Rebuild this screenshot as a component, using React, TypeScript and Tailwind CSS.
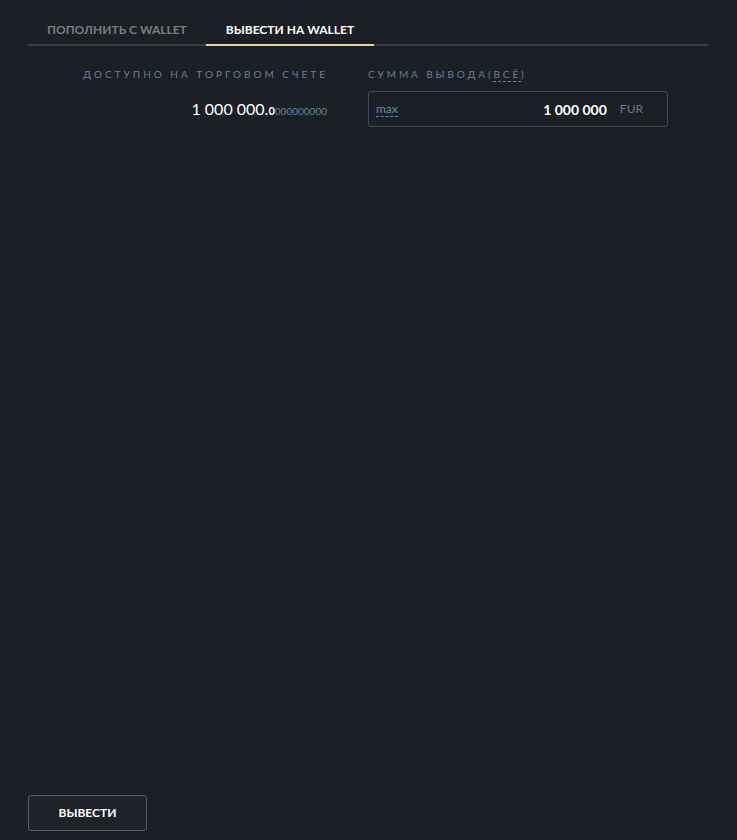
import React from "react";

export default function App() {
  return (
    <div
      className="min-h-[840px] w-full bg-[#1b1f26] flex flex-col px-[28px] pb-[9px]"
      style={{ fontFamily: "Lato, 'Noto Sans', sans-serif" }}
    >
      <div className="flex border-b-2 border-[#3a3e44] mt-[15px] w-[680px]">
        <div className="px-[19px] h-[31px] flex items-center text-[12px] font-bold text-[#7b7d80] -mb-[2px] border-b-2 border-transparent">
          ПОПОЛНИТЬ С WALLET
        </div>
        <div className="px-[20px] h-[31px] flex items-center text-[12px] font-bold text-white -mb-[2px] border-b-2 border-[#f3d08f]">
          ВЫВЕСТИ НА WALLET
        </div>
      </div>

      <div className="flex gap-[40px] mt-[21px]">
        <div className="w-[300px] flex flex-col items-end">
          <div className="text-[10px] tracking-[3px] text-[#6a8094] leading-[14px]">
            ДОСТУПНО НА ТОРГОВОМ СЧЕТЕ
          </div>
          <div className="mt-[16px] flex items-baseline mr-[1px]">
            <span className="text-[16px] text-white">1 000 000.</span>
            <span className="text-[11px] text-white font-bold">0</span>
            <span className="text-[10px] text-[#6a8094]">000000000</span>
          </div>
        </div>
        <div className="w-[300px] flex flex-col">
          <div className="text-[10px] tracking-[2.9px] text-[#6a8094] leading-[14px] flex">
            СУММА ВЫВОДА(
            <span className="border-b border-dashed border-[#6a8094]">ВСЁ</span>)
          </div>
          <div className="mt-[9px] h-[36px] border border-[#474c53] rounded-[3px] flex items-center pl-[7px] pr-[24px]">
            <span className="text-[12px] text-[#6a8ca2] border-b border-dashed border-[#6a8ca2] leading-[14px]">
              max
            </span>
            <span className="ml-auto text-[14px] font-bold text-white">1 000 000</span>
            <span className="ml-[13px] text-[12px] text-[#6d7782]">FUR</span>
          </div>
        </div>
      </div>

      <div className="mt-auto">
        <button className="w-[119px] h-[36px] border border-[#585c62] rounded-[3px] text-[12px] font-bold text-white bg-[#1e2229]">
          ВЫВЕСТИ
        </button>
      </div>
    </div>
  );
}
